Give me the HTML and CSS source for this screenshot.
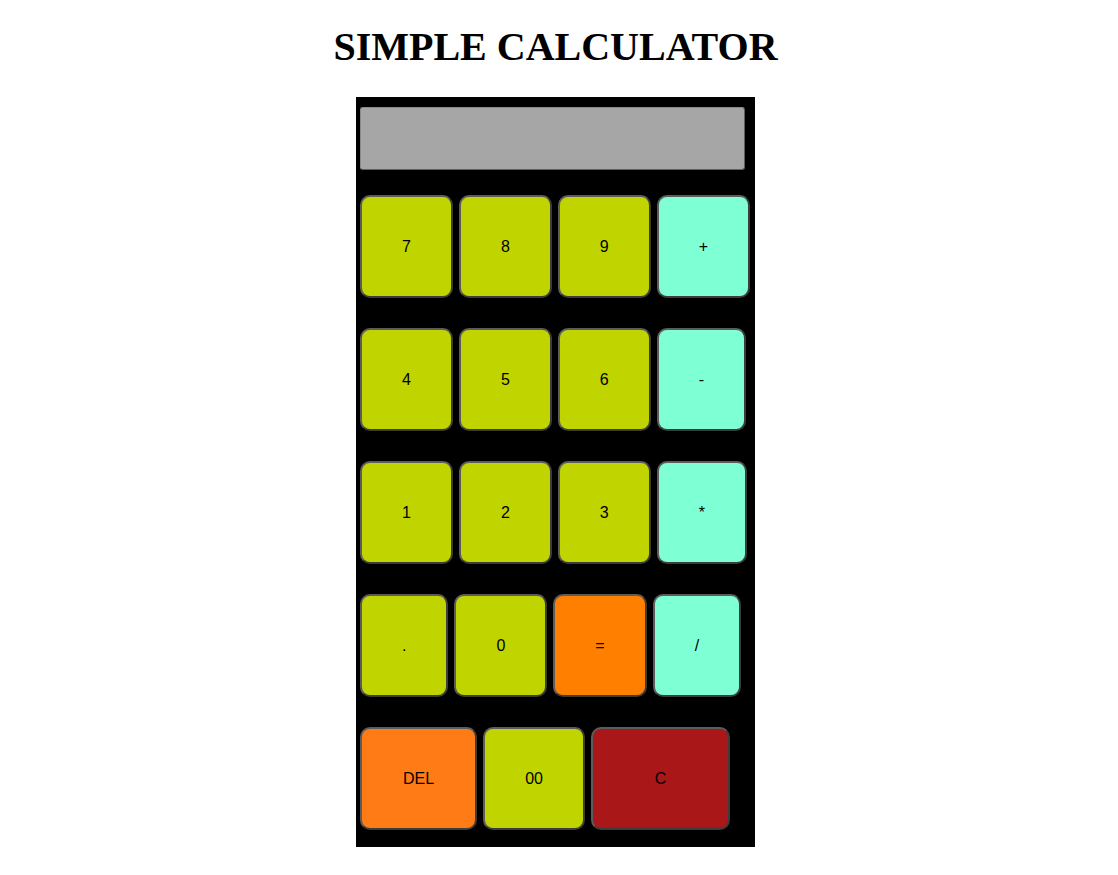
FILE: index.html
```html
<!DOCTYPE html>
<html>
<head>
<meta charset="utf-8">
<title>Simple Calculator</title>
<link rel="stylesheet" href="styles.css">
</head>
<body>
<h1 class="title">SIMPLE CALCULATOR</h1>
<div class="calc">
  <div class="display"></div>
  <div class="row">
    <button class="key num">7</button>
    <button class="key num">8</button>
    <button class="key num">9</button>
    <button class="key op">+</button>
  </div>
  <div class="row">
    <button class="key num">4</button>
    <button class="key num">5</button>
    <button class="key num">6</button>
    <button class="key op">-</button>
  </div>
  <div class="row">
    <button class="key num">1</button>
    <button class="key num">2</button>
    <button class="key num">3</button>
    <button class="key op">*</button>
  </div>
  <div class="row">
    <button class="key num">.</button>
    <button class="key num">0</button>
    <button class="key eq">=</button>
    <button class="key op">/</button>
  </div>
  <div class="row">
    <button class="key del">DEL</button>
    <button class="key num">00</button>
    <button class="key clear">C</button>
  </div>
</div>
</body>
</html>
```
FILE: styles.css
```css
html, body {
  margin: 0;
  padding: 0;
  background: #ffffff;
}
body {
  padding-right: 7px;
  font-family: "Liberation Serif", "Times New Roman", serif;
}
.title {
  margin: 23px 0 27px;
  text-align: center;
  font-family: "Liberation Serif", "Times New Roman", serif;
  font-size: 40px;
  font-weight: bold;
  line-height: normal;
  color: #000;
}
.calc {
  width: 399px;
  height: 750px;
  box-sizing: border-box;
  margin: 0 auto;
  background: #000;
  padding: 10px 0 17px 4px;
}
.display {
  width: 385px;
  height: 63px;
  box-sizing: border-box;
  background: #a6a6a6;
  border: 1px solid #5e5e5e;
  border-top-color: #8a8a8a;
  border-left-color: #8a8a8a;
  border-radius: 3px;
  margin-bottom: 25px;
}
.row {
  display: flex;
  gap: 6px;
  margin-bottom: 30px;
}
.row:last-child {
  margin-bottom: 0;
}
.key {
  height: 103px;
  box-sizing: border-box;
  padding: 0 40px;
  border: 2px solid #5c5c5c;
  border-right-color: #3c3c3c;
  border-bottom-color: #3c3c3c;
  border-radius: 10px;
  font-family: "Liberation Sans", Arial, sans-serif;
  font-size: 16px;
  color: #000;
  flex: none;
}
.num {
  background: #c0d400;
}
.op {
  background: #7fffd4;
}
.eq {
  background: #ff8000;
}
.del {
  background: #ff7b16;
  padding: 0 41px;
}
.clear {
  background: #aa1719;
  width: 139px;
}
```
